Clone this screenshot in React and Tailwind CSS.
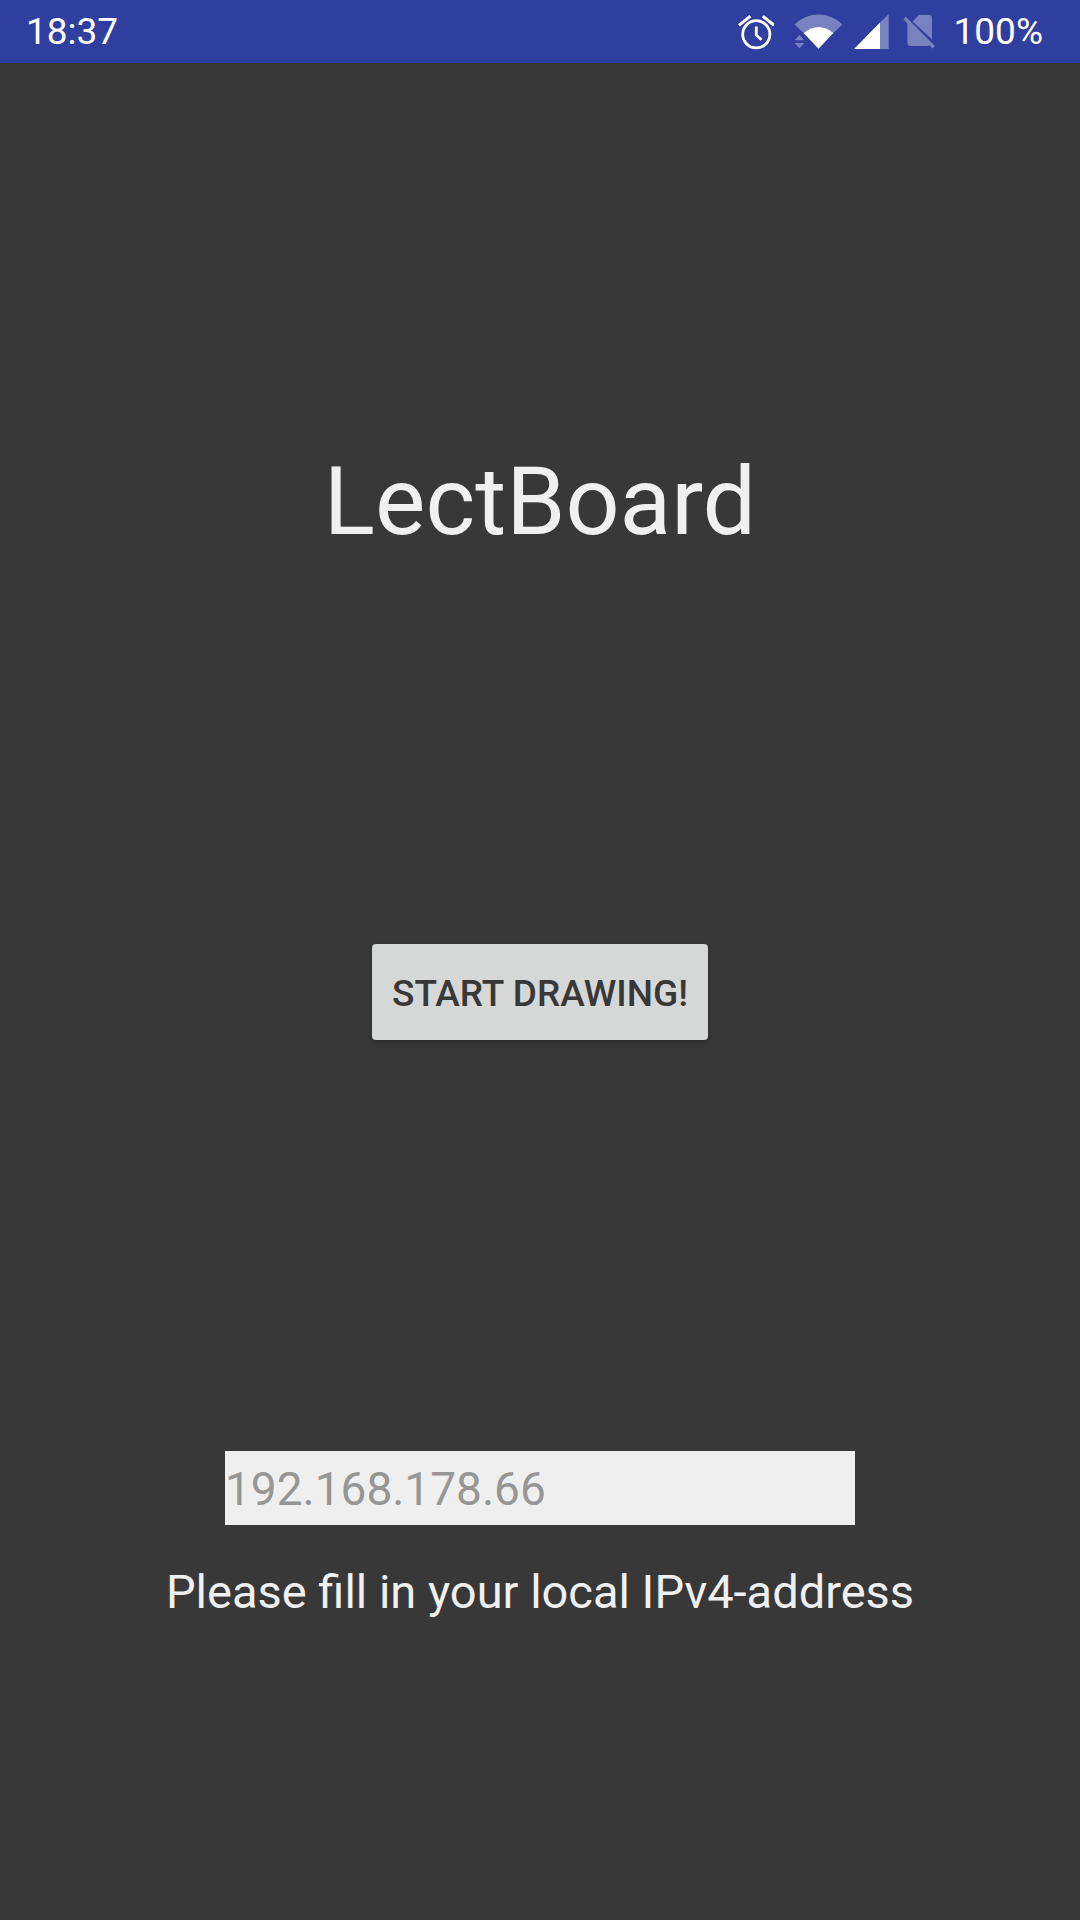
function AlarmIcon() {
  return (
    <svg className="h-9 w-9" viewBox="738 14 36 36" fill="none" stroke="#fff" strokeWidth="2.8" aria-hidden="true">
      <circle cx="756.3" cy="34.3" r="13.6" />
      <path d="M739 25.3 L750.3 16.2 M762.8 16.2 L774 25.3" strokeWidth="3" />
      <path d="M756.3 26.5 V35.2 L761.6 39.8" strokeWidth="2.8" />
    </svg>
  );
}

function WifiIcon() {
  return (
    <svg className="ml-5 h-9 w-[49px]" viewBox="794 14 49 36" fill="#fff" aria-hidden="true">
      <path d="M794.6 24.4 Q805 14.6 818.5 14.6 Q832 14.6 842.4 24.4 L833.4 33 Q826.5 27 818.5 27 Q810.5 27 803.6 33 Z" opacity="0.35" />
      <path d="M803.6 33 Q810.5 27 818.5 27 Q826.5 27 833.4 33 L818.5 48.8 Z" />
      <path d="M794.6 40.2 H804.2 L799.4 35 Z M794.6 43 H804.2 L799.4 48.2 Z" opacity="0.35" />
    </svg>
  );
}

function SignalIcon() {
  return (
    <svg className="ml-[11px] h-9 w-[35px]" viewBox="854 14 35 36" fill="#fff" aria-hidden="true">
      <path d="M880 22.6 L888.7 14 V49 H880 Z" opacity="0.35" />
      <path d="M854 49 L880 22.6 V49 Z" />
    </svg>
  );
}

function NoSimIcon() {
  return (
    <svg className="ml-[14px] h-9 w-[33px]" viewBox="903 14 33 36" fill="#fff" aria-hidden="true">
      <g opacity="0.35">
        <path d="M912.6 21.4 L919 15 H929 Q932 15 932 18 V39.4 Z" />
        <path d="M903.4 19.2 L905.8 16.8 L935 46 L932.6 48.6 L929.4 45.6 Q928.8 46 928 46 H911 Q907.4 46 907.4 42.6 V23.4 Z" />
      </g>
    </svg>
  );
}

export default function App() {
  return (
    <div className="flex min-h-screen flex-col bg-[#383838] font-[Roboto,sans-serif] text-[#f0f0f0]">
      <header className="flex h-[63px] items-center bg-[#303f9f] pr-[37px] pl-[26px] text-[37px] leading-[44px] text-white">
        <time>18:37</time>
        <div className="ml-auto flex items-center">
          <AlarmIcon />
          <WifiIcon />
          <SignalIcon />
          <NoSimIcon />
          <span className="ml-[18px]">100%</span>
        </div>
      </header>
      <main className="flex grow flex-col items-center">
        <div className="grow-[383]" />
        <h1 className="text-[95px] leading-[112px]">LectBoard</h1>
        <div className="grow-[386]" />
        <button
          type="button"
          className="h-24 rounded bg-[#d6d7d7] px-5 pt-1 text-[37px] font-medium text-[#383838] shadow-[0_3px_5px_rgba(0,0,0,0.25)]"
        >
          START DRAWING!
        </button>
        <div className="grow-[411]" />
        <input
          id="address"
          type="text"
          placeholder="192.168.178.66"
          className="h-[74px] w-7/12 bg-[#efefef] pt-0.5 text-[46px] text-[#383838] outline-none placeholder:text-[#969696]"
        />
        <label htmlFor="address" className="mt-[39px] text-[47px] leading-[56px]">
          Please fill in your local IPv4-address
        </label>
        <div className="grow-[300]" />
      </main>
    </div>
  );
}
